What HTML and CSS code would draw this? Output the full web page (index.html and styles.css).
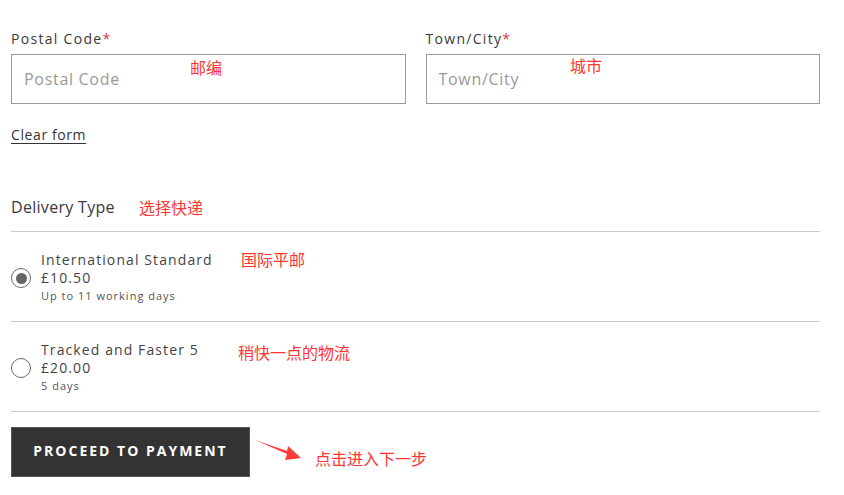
FILE: index.html
```html
<!DOCTYPE html>
<html>
<head>
<meta charset="utf-8">
<link rel="stylesheet" href="styles.css">
</head>
<body>
<div class="page">
  <form class="form">
    <div class="row">
      <div class="field">
        <label class="label">Postal Code<span class="req">*</span></label>
        <input class="input" placeholder="Postal Code">
      </div>
      <div class="field">
        <label class="label">Town/City<span class="req">*</span></label>
        <input class="input" placeholder="Town/City">
      </div>
    </div>
    <a class="clear">Clear form</a>
    <h3 class="section">Delivery Type</h3>
    <div class="options">
      <label class="option">
        <span class="radio checked"></span>
        <span class="opt-text">
          <span class="opt-title">International Standard</span>
          <span class="opt-price">£10.50</span>
          <span class="opt-note">Up to 11 working days</span>
        </span>
      </label>
      <label class="option">
        <span class="radio"></span>
        <span class="opt-text">
          <span class="opt-title">Tracked and Faster 5</span>
          <span class="opt-price">£20.00</span>
          <span class="opt-note">5 days</span>
        </span>
      </label>
    </div>
    <button type="button" class="btn">Proceed to payment</button>
  </form>

  <span class="note n1">邮编</span>
  <span class="note n2">城市</span>
  <span class="note n3">选择快递</span>
  <span class="note n4">国际平邮</span>
  <span class="note n5">稍快一点的物流</span>
  <svg class="arrow" width="50" height="24" viewBox="0 0 50 24">
    <polygon points="0,1 32,12 33,7 46,19 30,21 32,15" fill="#ff3b3b"/>
  </svg>
  <span class="note n6">点击进入下一步</span>
</div>
</body>
</html>
```
FILE: styles.css
```css
* { box-sizing: border-box; }
html, body { margin: 0; padding: 0; background: #fff; }
body {
  font-family: "Open Sans", "Noto Sans", sans-serif;
  color: #333;
}
.page {
  position: relative;
  width: 844px;
  height: 495px;
  overflow: hidden;
}
.form {
  width: 809px;
  margin-left: 11px;
  padding-top: 29px;
}
.row {
  display: flex;
  gap: 20px;
}
.field {
  display: flex;
  flex-direction: column;
  width: 394.5px;
}
.label {
  font-size: 14px;
  line-height: 20px;
  letter-spacing: 1.3px;
  color: #3a3a3a;
  margin-bottom: 5px;
}
.req { color: #e2344f; letter-spacing: 0; }
.input {
  height: 50px;
  border: 1px solid #999;
  border-radius: 0;
  padding: 0 12px;
  font-family: inherit;
  font-size: 16px;
  letter-spacing: 0.7px;
  outline: none;
}
.input::placeholder { color: #9a9a9a; }
.clear {
  display: inline-block;
  margin-top: 21px;
  font-size: 14px;
  line-height: 20px;
  letter-spacing: 0.6px;
  color: #333;
  text-decoration: underline;
  text-underline-offset: 3px;
}
.section {
  margin: 50px 0 0;
  font-size: 16px;
  line-height: 24px;
  font-weight: 400;
  letter-spacing: 0.3px;
  color: #3a3a3a;
  padding-bottom: 12px;
  border-bottom: 1px solid #ccc;
}
.option {
  display: flex;
  align-items: center;
  gap: 10px;
  padding: 19px 0 16px;
  border-bottom: 1px solid #ccc;
}
.radio {
  width: 20px;
  height: 20px;
  border: 1.5px solid #6a6a6a;
  border-radius: 50%;
  display: flex;
  align-items: center;
  justify-content: center;
  flex: none;
}
.radio.checked::after {
  content: "";
  width: 11px;
  height: 11px;
  border-radius: 50%;
  background: #666;
}
.opt-text {
  display: flex;
  flex-direction: column;
}
.opt-title, .opt-price {
  font-size: 14px;
  line-height: 18px;
  letter-spacing: 1.1px;
  color: #444;
}
.opt-note {
  font-size: 11px;
  line-height: 18px;
  letter-spacing: 1px;
  color: #555;
}
.btn {
  margin-top: 15px;
  width: 239px;
  height: 50px;
  background: #333;
  border: 1px solid #555;
  color: #fff;
  font-family: inherit;
  font-size: 14px;
  font-weight: 700;
  letter-spacing: 2px;
  text-transform: uppercase;
  padding: 0 0 3px;
}
.note {
  position: absolute;
  font-family: "Noto Sans CJK SC", sans-serif;
  font-size: 16px;
  line-height: 20px;
  color: #ff3333;
  white-space: nowrap;
}
.n1 { left: 190px; top: 57px; }
.n2 { left: 570px; top: 55px; }
.n3 { left: 139px; top: 197px; }
.n4 { left: 241px; top: 249px; }
.n5 { left: 238px; top: 342px; }
.n6 { left: 315px; top: 448px; }
.arrow { position: absolute; left: 255px; top: 439px; }
```
